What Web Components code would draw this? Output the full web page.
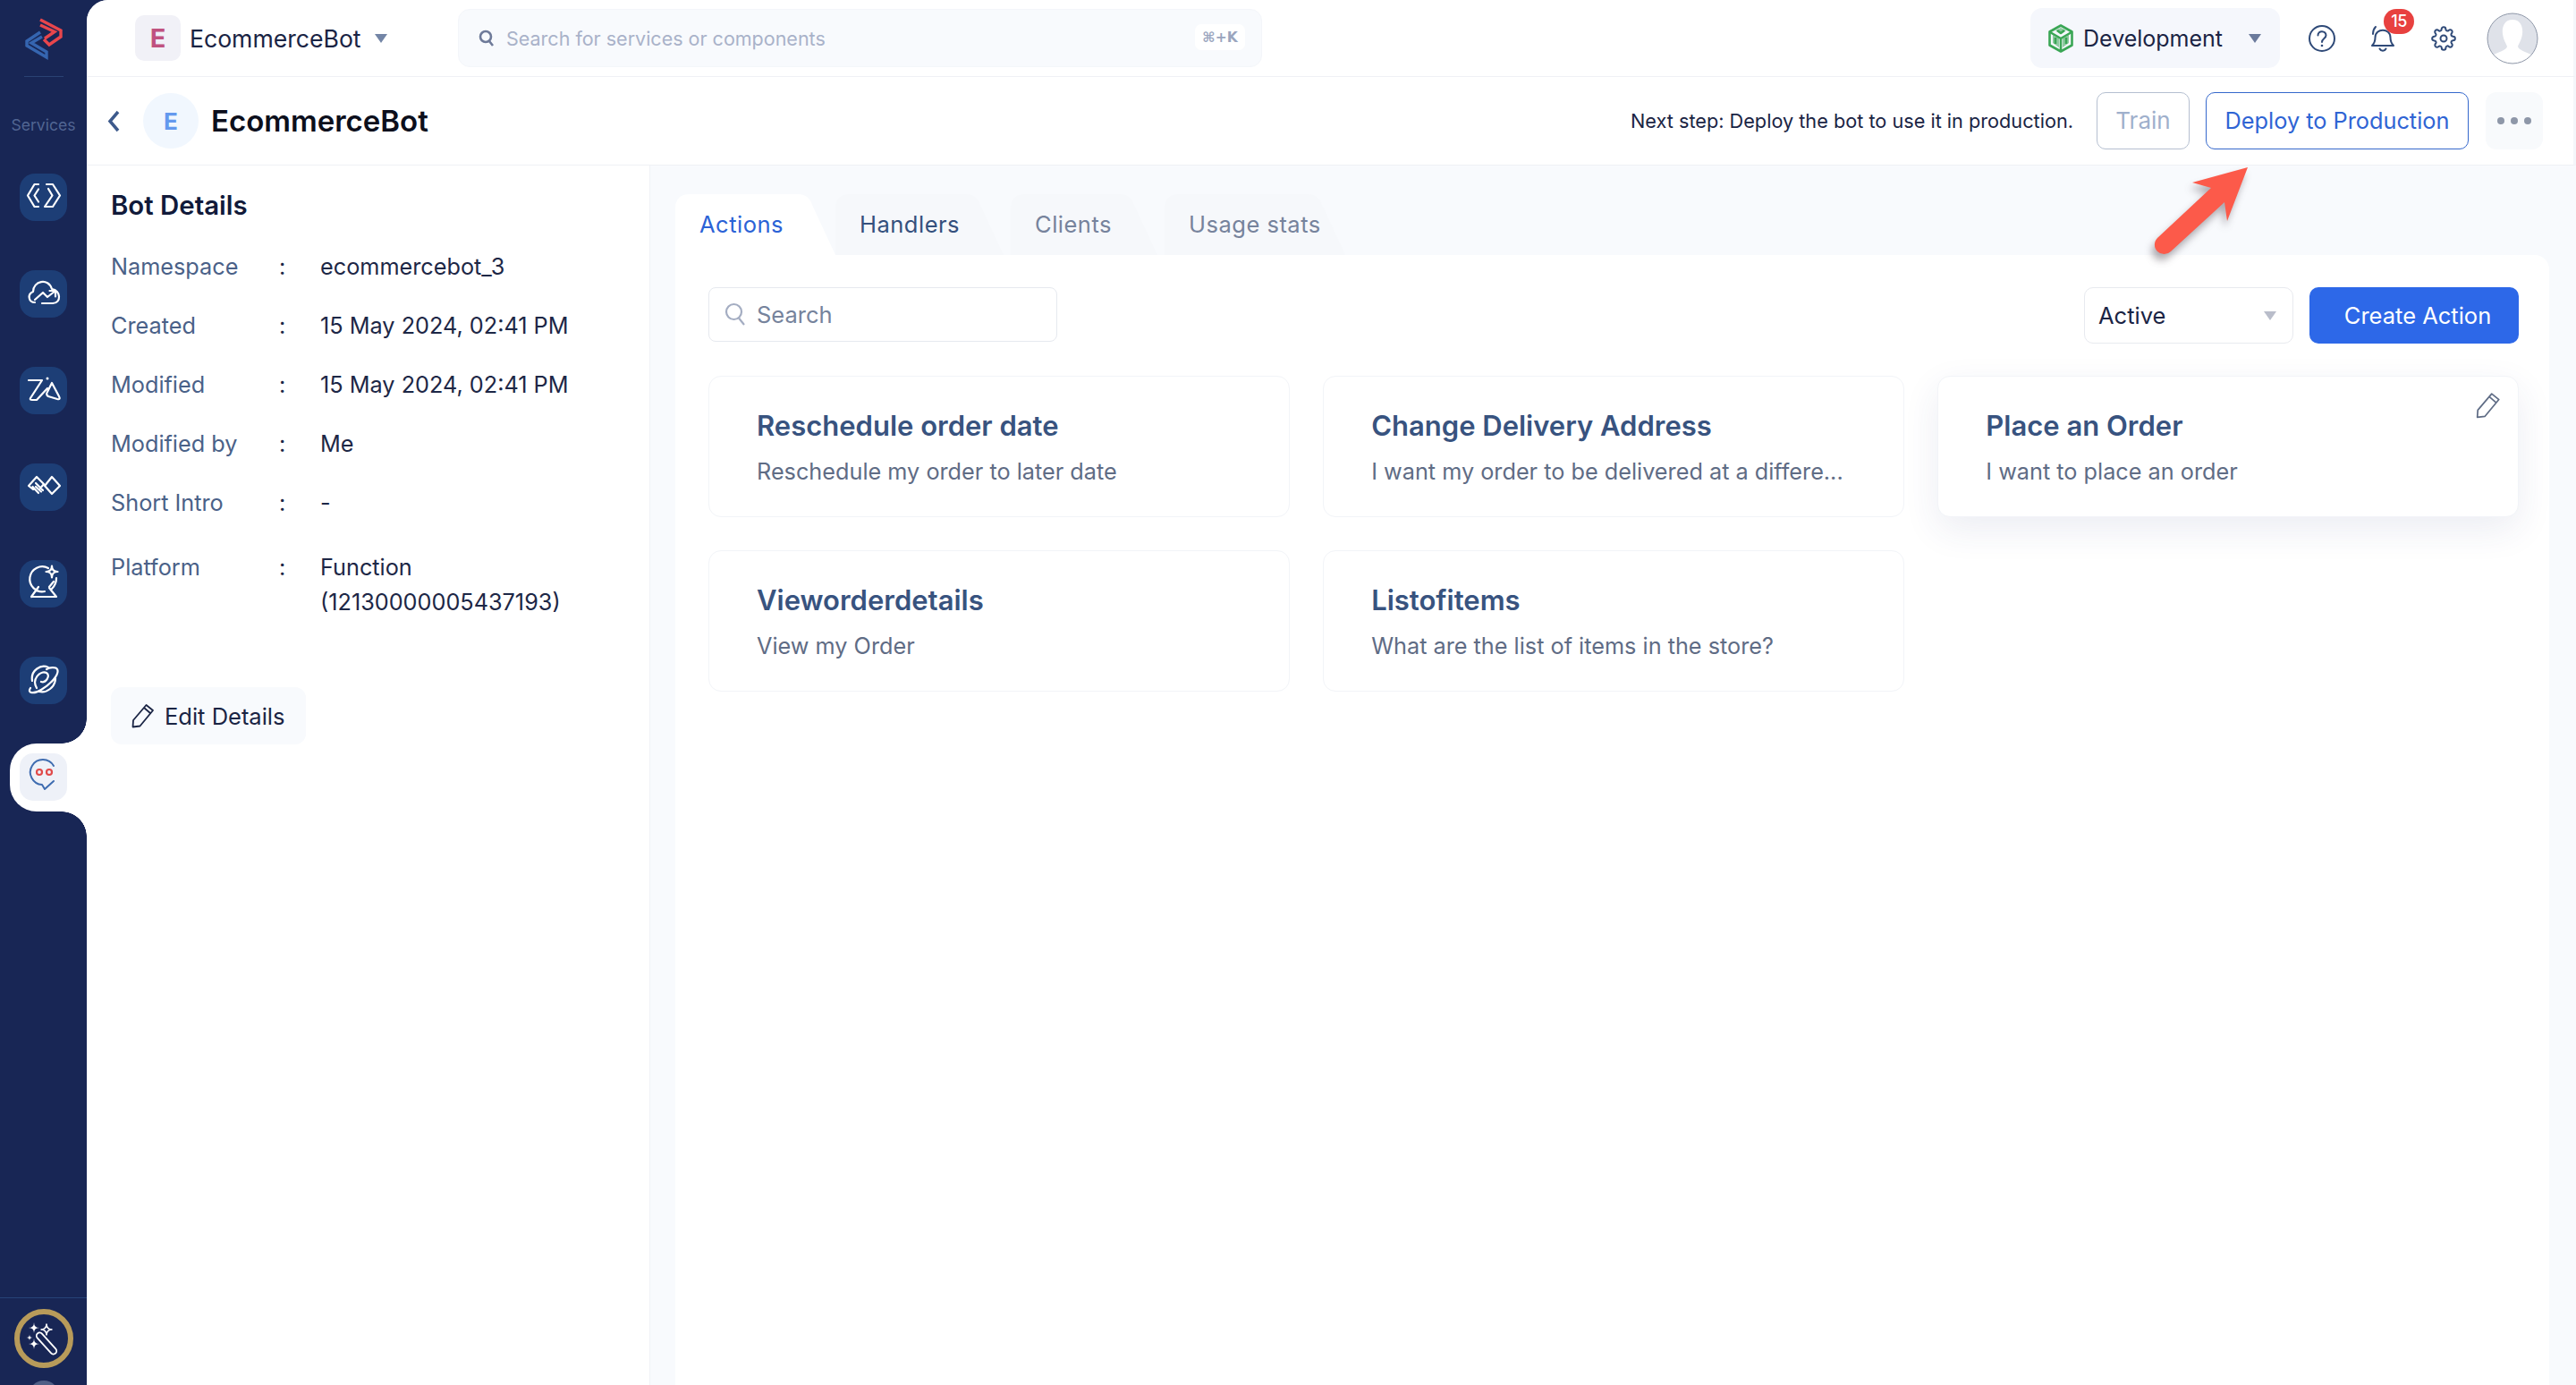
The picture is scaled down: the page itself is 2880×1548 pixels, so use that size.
<!DOCTYPE html>
<html><head><meta charset="utf-8"><title>EcommerceBot</title>
<style>
html,body{margin:0;padding:0;background:#182655;font-family:Inter,"Liberation Sans",sans-serif;}
</style></head><body>
<app-shell>
  <side-nav slot="nav"></side-nav>
  <top-bar slot="main"></top-bar>
  <sub-bar slot="main"></sub-bar>
  <content-area slot="main">
    <bot-details slot="left"></bot-details>
    <tab-strip slot="right"></tab-strip>
    <actions-panel slot="right"></actions-panel>
  </content-area>
  <callout-arrow slot="over"></callout-arrow>
</app-shell>
<script>
const star=(x,y,r)=>`M${x} ${y-r}Q${x} ${y} ${x+r} ${y}Q${x} ${y} ${x} ${y+r}Q${x} ${y} ${x-r} ${y}Q${x} ${y} ${x} ${y-r}Z`;
const def=(name,html,init)=>customElements.define(name,class extends HTMLElement{
  connectedCallback(){ if(this.shadowRoot) return; const s=this.attachShadow({mode:'open'}); s.innerHTML=typeof html==='function'?html(this):html; if(init)init(this,s);}
});
const pencil=(w,h,c,sw)=>`<svg width="${w}" height="${h}" viewBox="0 0 26 28" fill="none" stroke="${c}" stroke-width="${sw}" stroke-linejoin="round"><path d="M1.5 26.5 L2 19 L16.5 2 L24 8 L9.5 25.5 Z M14 5 L21.5 11.5"/></svg>`;
const caret=(c,w=14,h=10)=>`<svg width="${w}" height="${h}" viewBox="0 0 14 10"><path d="M0 0H14L7 10Z" fill="${c}"/></svg>`;

def('app-shell',`<style>
:host{display:flex;position:relative;width:2880px;height:1548px;overflow:hidden;background:#182655}
.nav{flex:0 0 97px;display:flex}
.main{flex:1;min-width:0;display:flex;flex-direction:column;background:#fff;border-top-left-radius:24px;overflow:hidden}
</style><div class="nav"><slot name="nav"></slot></div><div class="main"><slot name="main"></slot></div><slot name="over"></slot>`);

const W='fill="none" stroke="#fff" stroke-width="2.200" stroke-linecap="round" stroke-linejoin="round"';
const icons={
 code:`<path d="M21 12H16.5L9 24.5 16.5 37H21M21 17.5 16.5 24.5 21 31.5M30 12H37L45 24.5 37 37H28L36.5 24.5 32 17"/>`,
 cloud:`<path d="M17 36C10 36 8 27 15 24C15 12 32 8 36 21C46 22 47 37 37 37H25"/><path d="M17 33 26 25 31 30 40 23M33.5 23H40V29.5"/>`,
 zia:`<path d="M10 15H25L12 35Q11 37 14 37H19L31 24M36 18 44 33Q46 37 42 36L32 33Q29 31 31 28Z"/><circle cx="31" cy="13" r="1.5" fill="#fff" stroke="none"/>`,
 hand:`<path d="M36 15 45 25 36 34 28 25ZM22 29 27 23 19 15 10 25 15 29M14.500 26 21 33M18 26 24 31.500M18 22 26 30"/>`,
 ball:`<path d="M32 9A14 14 0 1 0 28 35M41 20Q41 27 36 32M13 41H41L33 31M21 30 13 41M33 30 38 24"/><path d="${star(36,13,6.5)}"/>`,
 planet:`<path d="M12 35C8 41 16 42 24 37C34 31 45 20 42 14C40 11 33 12 30 14M14 27C12 15 24 8 32 12M40 24C40 34 30 41 22 39M19 35C13 25 23 15 30 18C35 21 29 30 24 28"/>`
};
def('nav-tile',t=>`<style>:host{display:flex;align-items:center;justify-content:center;width:53px;height:53px;border-radius:17px;background:#1d3e76}</style><svg width="53" height="53" viewBox="0 0 53 53" ${W}>${icons[t.getAttribute('icon')]}</svg>`);

def('side-nav',`<style>
:host{display:flex;flex-direction:column;width:97px;height:1548px;background:#182655;overflow:hidden}
.logo{display:block;margin:10px 0 0 20px}
.rule{width:44px;height:1px;background:#2a4273;margin:5px 0 0 27px}
.label{font:400 17.600px/24px Inter,sans-serif;color:#516592;text-align:center;margin-top:42px;height:24px}
.tiles{display:flex;flex-direction:column;margin-top:42px;padding-left:22px;gap:55px}
.active{position:relative;display:flex;width:86px;height:76px;margin:-11px 0 0 -11px;padding:11px 0 0 11px;box-sizing:border-box;background:#fff;border-radius:30px 0 0 30px}
.active::before,.active::after{content:"";position:absolute;right:0;width:28px;height:28px}
.active::before{top:-28px;background:radial-gradient(circle at 0 0,#182655 27.500px,#fff 28px)}
.active::after{bottom:-28px;background:radial-gradient(circle at 0 100%,#182655 27.500px,#fff 28px)}
.chat{width:53px;height:53px;border-radius:15px;background:#eef1f8}
.foot{margin-top:auto;display:flex;flex-direction:column;align-items:center}
.foot .line{width:97px;height:1px;background:#264377}
.magic{display:block;margin-top:12px}
.peek{width:34px;height:34px;border-radius:50%;background:#4f5f86;margin-top:14px;margin-bottom:-29px}
</style>
<svg class="logo" width="60" height="70" viewBox="0 0 60 70" fill="none" stroke-width="3.400" stroke-linejoin="miter">
 <path d="M25 26 10 36V41L32 54V48L15 38 27 31" stroke="#3565b0"/>
 <path d="M25 18 41 25.500 30 33M25 12 48 24V31L35 40 29 34" stroke="#e8464c"/>
</svg>
<div class="rule"></div>
<div class="label">Services</div>
<div class="tiles">
 <nav-tile icon="code"></nav-tile><nav-tile icon="cloud"></nav-tile><nav-tile icon="zia"></nav-tile>
 <nav-tile icon="hand"></nav-tile><nav-tile icon="ball"></nav-tile><nav-tile icon="planet"></nav-tile>
 <div class="active"><div class="chat"><svg width="53" height="53" viewBox="0 0 53 53" fill="none">
   <path d="M38 14A14 14 0 1 0 25 35L28 40 38 31" stroke="#3e6cb0" stroke-width="2" stroke-linejoin="round" stroke-linecap="round"/>
   <circle cx="22" cy="21" r="3" stroke="#e04a4a" stroke-width="2.200"/><circle cx="33" cy="21" r="3" stroke="#e04a4a" stroke-width="2.200"/></svg></div></div>
</div>
<div class="foot"><div class="line"></div>
 <svg class="magic" width="66" height="66" viewBox="0 0 66 66" fill="none">
  <circle cx="33" cy="33" r="30" stroke="#b89b5a" stroke-width="6"/>
  <rect x="21" y="35" width="30" height="7" rx="3.500" transform="rotate(48 36 38.500)" stroke="#fff" stroke-width="1.800"/>
  <path d="${star(22,21,6)}" fill="#fff"/><path d="${star(36,23,6.500)}" stroke="#fff" stroke-width="1.500"/>
  <path d="${star(22,39,6)}" fill="#fff"/><path d="${star(17,32,3.500)}" fill="#fff"/>
 </svg>
 <div class="peek"></div>
</div>`);

def('top-bar',`<style>
:host{display:flex;align-items:center;flex:0 0 85px;height:85px;box-sizing:content-box;border-bottom:1px solid #eff1f5;border-right:3px solid #f4f6fa;padding-left:54px;color:#1a2444;font-family:Inter,sans-serif;background:#fff}
.e{width:51px;height:51px;border-radius:10px;background:#f1f1f7;display:flex;align-items:center;justify-content:center;font-weight:700;font-size:29px;color:#c0527f}
.name{font-size:26.600px;margin-left:10px;width:192px;white-space:nowrap}
.c{margin-left:15px;display:flex}
.search{margin-left:79px;width:899px;height:65px;box-sizing:border-box;border:1px solid #f4f6fa;border-radius:13px;background:#f8fafd;display:flex;align-items:center;padding-left:22px;color:#a9b2c9;font-size:21.500px}
.search span{margin-left:13px;padding-top:1px}
.kbd{margin-left:auto;margin-right:18px;width:56px;height:29px;margin-top:-2px;background:#fff;border-radius:7px;font-weight:600;color:#9aa5be;display:flex;align-items:center;justify-content:center;font-family:"DejaVu Sans",Inter,sans-serif;font-size:15.500px}
.dev{margin-left:auto;width:279px;height:67px;box-sizing:border-box;border-radius:13px;background:#f5f7fc;display:flex;align-items:center;padding-left:20px;font-size:25px}
.dev span{margin-left:11px;width:156px;white-space:nowrap}
.dev .c{margin-left:29px}
.help{margin-left:31px}.bell{margin-left:37px;position:relative;display:flex}.gear{margin-left:39px}
.help,.gear{display:block}
.badge{position:absolute;left:16px;top:-17px;width:34px;height:28px;border-radius:14px;background:#e8413f;color:#fff;font-size:18px;font-weight:500;display:flex;align-items:center;justify-content:center;letter-spacing:-.5px}
.av{margin-left:34px;margin-right:39px;display:block}
</style>
<div class="e">E</div><div class="name">EcommerceBot</div><div class="c">${caret('#7385a6')}</div>
<div class="search"><svg width="18" height="20" viewBox="0 0 18 20" fill="none" stroke="#6e7a99" stroke-width="2.600"><circle cx="8" cy="8" r="6"/><path d="M12 13 16 18"/></svg><span>Search for services or components</span><div class="kbd">⌘+K</div></div>
<div class="dev"><svg width="28" height="32" viewBox="0 0 28 32" fill="none" stroke="#3aa655" stroke-width="2.600" stroke-linejoin="round"><path d="M14 1.500 26.500 8.500V23.500L14 30.500 1.500 23.500V8.500Z"/><path d="M8 7 14 4 20 7 14 11ZM5 12 12 16V26L5 21ZM23 12 16 16V26L23 21Z" fill="#3aa655" stroke="none" opacity=".55"/><path d="M2 9 14 16 26 9M14 16V30M8 15V22M20 15V22M10 7 14 10 18 7"/></svg><span>Development</span><div class="c">${caret('#6a7a9c')}</div></div>
<svg class="help" width="32" height="32" viewBox="0 0 32 32" fill="none" stroke="#2f4a78" stroke-width="2"><circle cx="16" cy="16" r="14"/><path d="M11.500 12.500C11.500 6.500 20.500 7 20.500 12.500C20.500 16 16 16 16 20" stroke-linecap="round"/><circle cx="16" cy="24" r="1.300" fill="#2f4a78" stroke="none"/></svg>
<div class="bell"><svg width="30" height="32" viewBox="0 0 30 32" fill="none" stroke="#2f4a78" stroke-width="2" stroke-linecap="round" stroke-linejoin="round"><path d="M3 24H27C24 21 23.500 19 23.500 15C23.500 4 6.500 4 6.500 15C6.500 19 6 21 3 24ZM11.500 27.500C13 30.500 17 30.500 18.500 27.500M4 11C4 8 5 5 7 3"/></svg><div class="badge">15</div></div>
<svg class="gear" width="28" height="28" viewBox="0 0 24 24" fill="none" stroke="#2f4a78" stroke-width="1.700"><path d="M12 15a3 3 0 1 0 0-6 3 3 0 0 0 0 6z"/><path d="M19.400 15a1.650 1.650 0 0 0 .33 1.820l.06.06a2 2 0 0 1 0 2.830 2 2 0 0 1-2.830 0l-.06-.06a1.650 1.650 0 0 0-1.820-.33 1.650 1.650 0 0 0-1 1.510V21a2 2 0 0 1-2 2 2 2 0 0 1-2-2v-.09A1.650 1.650 0 0 0 9 19.400a1.650 1.650 0 0 0-1.820.33l-.06.06a2 2 0 0 1-2.830 0 2 2 0 0 1 0-2.830l.06-.06a1.650 1.650 0 0 0 .33-1.820 1.650 1.650 0 0 0-1.510-1H3a2 2 0 0 1-2-2 2 2 0 0 1 2-2h.09A1.650 1.650 0 0 0 4.600 9a1.650 1.650 0 0 0-.33-1.820l-.06-.06a2 2 0 0 1 0-2.830 2 2 0 0 1 2.830 0l.06.06a1.650 1.650 0 0 0 1.820.33H9a1.650 1.650 0 0 0 1-1.510V3a2 2 0 0 1 2-2 2 2 0 0 1 2 2v.09a1.650 1.650 0 0 0 1 1.510 1.650 1.650 0 0 0 1.820-.33l.06-.06a2 2 0 0 1 2.830 0 2 2 0 0 1 0 2.830l-.06.06a1.650 1.650 0 0 0-.33 1.820V9a1.650 1.650 0 0 0 1.510 1H21a2 2 0 0 1 2 2 2 2 0 0 1-2 2h-.09a1.650 1.650 0 0 0-1.510 1z"/></svg>
<svg class="av" width="58" height="58" viewBox="0 0 58 58"><defs><clipPath id="cc"><circle cx="29" cy="29" r="28"/></clipPath></defs><circle cx="29" cy="29" r="28" fill="#dfe2e9"/><g clip-path="url(#cc)"><path d="M29 8C20 8 17 16 18 24C19 31 22 35 23 38C22 42 14 44 8 47V58H50V47C44 44 36 42 35 38C36 35 39 31 40 24C41 16 38 8 29 8Z" fill="#fff"/></g><circle cx="29" cy="29" r="28" fill="none" stroke="#8e97a8" stroke-width="1"/></svg>`);

def('sub-bar',`<style>
:host{display:flex;align-items:center;flex:0 0 98px;height:98px;border-bottom:1px solid #eff1f5;border-right:3px solid #f4f6fa;padding-left:23px;background:#fff;font-family:Inter,sans-serif}
.back{display:block}
.av{margin-left:26px;width:62px;height:62px;border-radius:50%;background:#f1f7fe;display:flex;align-items:center;justify-content:center;color:#6499ee;font-weight:700;font-size:26px}
.t{margin-left:14px;font-size:33px;font-weight:600;color:#0c0f1c;white-space:nowrap}
.next{margin-left:auto;font-size:21.700px;color:#1a2444;white-space:nowrap}
.btn{box-sizing:border-box;height:64px;border-radius:10px;display:flex;align-items:center;justify-content:center;font-size:25.300px;padding-bottom:1px}
.train{margin-left:26px;width:104px;border:1px solid #b5bfd0;color:#9fb0cc;font-size:26px}
.dep{margin-left:18px;width:294px;border:1.500px solid #3568cc;color:#2f64d4}
.more{margin-left:19px;margin-right:34px;width:64px;background:#f8fafc;border-radius:12px;gap:7px}
.more i{width:8px;height:8px;border-radius:50%;background:#8e97a8}
</style>
<svg class="back" width="14" height="25" viewBox="0 0 14 25" fill="none" stroke="#3d5a8c" stroke-width="3.500"><path d="M12 2 3 12.500 12 23"/></svg>
<div class="av">E</div><div class="t">EcommerceBot</div>
<div class="next">Next step: Deploy the bot to use it in production.</div>
<div class="btn train">Train</div><div class="btn dep">Deploy to Production</div><div class="btn more"><i></i><i></i><i></i></div>`);

def('content-area',`<style>
:host{display:flex;flex:1;min-height:0;background:#f8fafd}
.l{flex:0 0 630px;display:flex}
.r{margin:32px 30px 0 28px;flex:1;min-width:0;display:flex;flex-direction:column}
</style><div class="l"><slot name="left"></slot></div><div class="r"><slot name="right"></slot></div>`);

def('detail-row',t=>`<style>
:host{display:grid;grid-template-columns:188px 46px 300px;font-size:25.250px;line-height:39px}
.l{color:#4a6188}.c{color:#1d2746}.v{color:#1d2746}
</style><div class="l">${t.getAttribute('label')}</div><div class="c">:</div><div class="v"><slot></slot></div>`);

def('bot-details',`<style>
:host{display:flex;flex-direction:column;width:630px;box-sizing:border-box;background:#fff;border-right:1px solid #f0f2f7;padding:25px 0 0 27px;font-family:Inter,sans-serif}
h2{margin:0 0 29px;font-size:29.400px;line-height:40px;font-weight:600;color:#111a3a}
.rows{display:flex;flex-direction:column;gap:27px;width:534px}
.plat{margin-top:6px}
.edit{margin-top:75px;width:218px;height:64px;box-sizing:border-box;border-radius:12px;background:#f8fafd;display:flex;align-items:center;padding-left:23px;gap:11px;font-size:25.500px;color:#1a2444}
svg{display:block}
</style><h2>Bot Details</h2>
<div class="rows">
<detail-row label="Namespace">ecommercebot_3</detail-row>
<detail-row label="Created">15 May 2024, 02:41 PM</detail-row>
<detail-row label="Modified">15 May 2024, 02:41 PM</detail-row>
<detail-row label="Modified by">Me</detail-row>
<detail-row label="Short Intro">-</detail-row>
<detail-row class="plat" label="Platform">Function (12130000005437193)</detail-row>
</div>
<div class="edit">${pencil(26,28,'#1a2444',1.8)}<span>Edit Details</span></div>`);

def('tab-item',t=>{
 const w=+t.getAttribute('w'),a=t.hasAttribute('active');
 return `<style>:host{position:relative;display:flex;align-items:center;box-sizing:border-box;width:${w}px;height:68px;padding:0 0 1px 27px;font-size:25.500px;color:${t.getAttribute('c')};z-index:${a?2:1};margin-right:${t.getAttribute('mr')||0}px;letter-spacing:.5px}
 svg{position:absolute;left:0;top:0}span{position:relative}</style>
 <svg width="${w}" height="68"><path d="M0 68V16Q0 0 16 0H${w-50}Q${w-38} 0 ${w-34} 12L${w-8} 68Z" fill="${a?'#fff':'#f6f8fb'}"/></svg><span><slot></slot></span>`});

def('tab-strip',`<style>:host{display:flex;flex:0 0 68px;font-family:Inter,sans-serif}</style>
<tab-item w="187" mr="-8" active c="#2b62d6">Actions</tab-item><tab-item w="196" c="#34507d">Handlers</tab-item><tab-item w="172" c="#76839c">Clients</tab-item><tab-item w="210" c="#76839c">Usage stats</tab-item>`);

def('action-card',t=>`<style>
:host{display:block;position:relative;height:158px;box-sizing:border-box;border:1px solid #f2f4f8;border-radius:14px;background:#fff;padding:37px 40px 0 53px;font-family:Inter,sans-serif}
:host([hover]){box-shadow:0 14px 40px rgba(40,60,120,.09)}
.t{font-size:31px;line-height:36px;font-weight:600;color:#38537f;white-space:nowrap}
.d{font-size:25.250px;line-height:36px;margin-top:15px;color:#5f6c85;white-space:nowrap}
.p{position:absolute;right:18px;top:17px;display:${t.hasAttribute('hover')?'block':'none'}}
</style><div class="t">${t.getAttribute('title')}</div><div class="d"><slot></slot></div><div class="p">${pencil(30,30,'#5f6c85',1.6)}</div>`);

def('actions-panel',`<style>
:host{display:block;flex:1;background:#fff;border-top-right-radius:16px;padding:36px 34px 0 37px;font-family:Inter,sans-serif}
.bar{display:flex;align-items:flex-start;height:63px}
.s{width:390px;height:61px;box-sizing:border-box;border:1.500px solid #e6e9ef;border-radius:8px;display:flex;align-items:center;padding-left:17px;gap:12px;font-size:25.500px;color:#76839c}
.sel{margin-left:auto;width:234px;height:63px;box-sizing:border-box;border:1.500px solid #e8eaef;border-radius:10px;display:flex;align-items:center;padding:0 18px 0 15px;font-size:25.500px;color:#1a2444;justify-content:space-between}
.cr{margin-left:18px;width:234px;height:63px;box-sizing:border-box;padding-left:8px;border-radius:10px;background:#2d68e8;color:#fff;display:flex;align-items:center;justify-content:center;font-size:25.500px}
.grid{display:grid;grid-template-columns:repeat(3,1fr);column-gap:37.500px;row-gap:37px;margin-top:36px}
</style>
<div class="bar"><div class="s"><svg width="24" height="27" viewBox="0 0 24 27" fill="none" stroke="#a4adc2" stroke-width="2.200"><circle cx="10.500" cy="10.500" r="8.500"/><path d="M16 17.500 22 25"/></svg><span>Search</span></div>
<div class="sel"><span>Active</span>${caret('#b9bdca',14,14)}</div><div class="cr">Create Action</div></div>
<div class="grid">
<action-card title="Reschedule order date">Reschedule my order to later date</action-card>
<action-card title="Change Delivery Address">I want my order to be delivered at a differe...</action-card>
<action-card hover title="Place an Order">I want to place an order</action-card>
<action-card title="Vieworderdetails">View my Order</action-card>
<action-card title="Listofitems">What are the list of items in the store?</action-card>
</div>`);

def('callout-arrow',`<style>:host{position:absolute;left:2400px;top:180px;width:130px;height:120px;z-index:5}svg{display:block;filter:drop-shadow(-3px 7px 4px rgba(60,50,60,.4))}</style>
<svg width="130" height="120" viewBox="0 0 130 120"><path d="M113 7 51 24 72 30 12 86A10.500 10.500 0 0 0 27 101L87 46 90 67Z" fill="#fc5a4a"/></svg>`);
</script>
</body></html>
